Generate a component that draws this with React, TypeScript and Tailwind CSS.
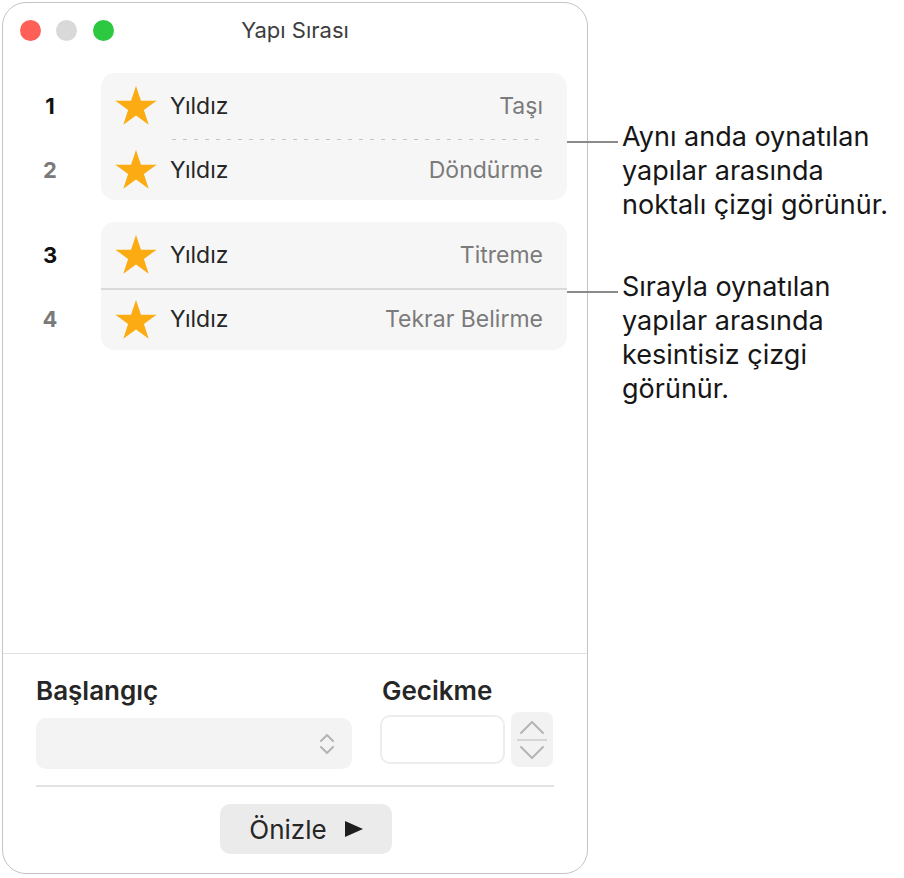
import React from "react";

const font = { fontFamily: "Inter, 'Noto Sans', sans-serif" };

function Star() {
  return (
    <svg width="42" height="40" viewBox="0 0 100 95" className="shrink-0">
      <polygon
        points="50,0 61.8,35.1 98.9,35.1 68.8,56.8 80.2,91.9 50,70.2 19.8,91.9 31.2,56.8 1.1,35.1 38.2,35.1"
        fill="#fcab12"
      />
    </svg>
  );
}

function Row({ effect, h }: { effect: string; h: string }) {
  return (
    <div className={`flex items-center pl-[14px] pr-[24px] ${h}`}>
      <Star />
      <span className="ml-[13px] text-[23px] text-[#262626]">Yıldız</span>
      <span className="ml-auto text-[23px] text-[#7b7b7b]">{effect}</span>
    </div>
  );
}

function Group({
  nums,
  effects,
  dashed,
}: {
  nums: [string, string];
  effects: [string, string];
  dashed: boolean;
}) {
  return (
    <div className="flex">
      <div className="flex w-[98px] flex-col text-[22px] font-bold">
        <div className="flex h-[66px] items-center justify-center pr-[4px] text-[#111]">{nums[0]}</div>
        <div className="h-px" />
        <div className="flex h-[60px] items-center justify-center pr-[4px] text-[#7a7a7a]">{nums[1]}</div>
      </div>
      <div className="w-[466px] rounded-[14px] bg-[#f6f6f6]">
        <Row effect={effects[0]} h="h-[66px]" />
        {dashed ? (
          <div className="ml-[71px] mr-[22px] h-px bg-[repeating-linear-gradient(to_right,#c4c4c4_0_4px,transparent_4px_11px)]" />
        ) : (
          <div className="h-[1.5px] bg-[#d9d9d9]" />
        )}
        <Row effect={effects[1]} h="h-[60px]" />
      </div>
    </div>
  );
}

function Callout({ top, lines }: { top: number; lines: string[] }) {
  return (
    <>
      <div
        className="absolute left-[567px] h-[1.5px] w-[51px] bg-[#8a8a8a]"
        style={{ top: top + 21 }}
      />
      <div
        className="absolute left-[622px] text-[27px] leading-[34px] text-[#161616]"
        style={{ top }}
      >
        {lines.map((l) => (
          <div key={l}>{l}</div>
        ))}
      </div>
    </>
  );
}

export default function App() {
  return (
    <div className="relative h-[878px] w-[904px] bg-white" style={font}>
      <div className="ml-[2px] mt-[2px] flex h-[872px] w-[586px] flex-col rounded-[24px] border border-[#c4c4c4] bg-white">
        {/* title bar */}
        <div className="relative flex h-[54px] items-center pl-[17px]">
          <div className="h-[21px] w-[21px] rounded-full bg-[#fe5f57]" />
          <div className="ml-[15px] h-[21px] w-[21px] rounded-full bg-[#d9d9d9]" />
          <div className="ml-[16px] h-[21px] w-[21px] rounded-full bg-[#2bc840]" />
          <div className="absolute inset-x-0 text-center text-[22px] text-[#3d3d3d]">Yapı Sırası</div>
        </div>

        {/* build list */}
        <div className="mt-[16px] flex flex-col gap-[22px]">
          <Group nums={["1", "2"]} effects={["Taşı", "Döndürme"]} dashed />
          <Group nums={["3", "4"]} effects={["Titreme", "Tekrar Belirme"]} dashed={false} />
        </div>

        <div className="flex-1" />
        <div className="h-[1.5px] bg-[#e2e2e2]" />

        {/* bottom controls */}
        <div className="px-[33px] pb-[19px] pt-[22px]">
          <div className="flex gap-[28px]">
            <div className="w-[316px]">
              <div className="text-[26px] font-semibold leading-[30px] text-[#262626]">Başlangıç</div>
              <div className="mt-[12px] flex h-[51px] items-center justify-end rounded-[10px] bg-[#f3f3f3] pr-[17px]">
                <svg width="16" height="22" viewBox="0 0 16 22" fill="none" stroke="#b3b3b3" strokeWidth="2" strokeLinecap="round" strokeLinejoin="round">
                  <path d="M2 8l6-6 6 6" />
                  <path d="M2 14l6 6 6-6" />
                </svg>
              </div>
            </div>
            <div>
              <div className="pl-[2px] text-[26px] font-semibold leading-[30px] text-[#262626]">Gecikme</div>
              <div className="mt-[6px] flex items-center gap-[6px]">
                <div className="h-[49px] w-[125px] rounded-[10px] border-2 border-[#ededed] bg-white" />
                <div className="flex h-[55px] w-[42px] flex-col items-center justify-center rounded-[8px] bg-[#f2f2f2]">
                  <svg width="26" height="15" viewBox="0 0 26 15" fill="none" stroke="#b5b5b5" strokeWidth="2" strokeLinecap="round" strokeLinejoin="round">
                    <path d="M2 13L13 2l11 11" />
                  </svg>
                  <div className="my-[4px] h-[2px] w-[30px] bg-[#d6d6d6]" />
                  <svg width="26" height="15" viewBox="0 0 26 15" fill="none" stroke="#b5b5b5" strokeWidth="2" strokeLinecap="round" strokeLinejoin="round">
                    <path d="M2 2l11 11 11-11" />
                  </svg>
                </div>
              </div>
            </div>
          </div>
          <div className="mt-[16px] h-[2px] bg-[#e3e3e3]" />
          <div className="mt-[17px] flex justify-center pl-[22px]">
            <div className="flex h-[50px] w-[172px] items-center justify-center gap-[18px] rounded-[10px] bg-[#ebebeb]">
              <span className="text-[26px] text-[#262626]">Önizle</span>
              <svg width="18" height="16" viewBox="0 0 18 16">
                <polygon points="0,0 18,8 0,16" fill="#1e1e1e" />
              </svg>
            </div>
          </div>
        </div>
      </div>

      <Callout top={118} lines={["Aynı anda oynatılan", "yapılar arasında", "noktalı çizgi görünür."]} />
      <Callout top={268} lines={["Sırayla oynatılan", "yapılar arasında", "kesintisiz çizgi", "görünür."]} />
    </div>
  );
}
